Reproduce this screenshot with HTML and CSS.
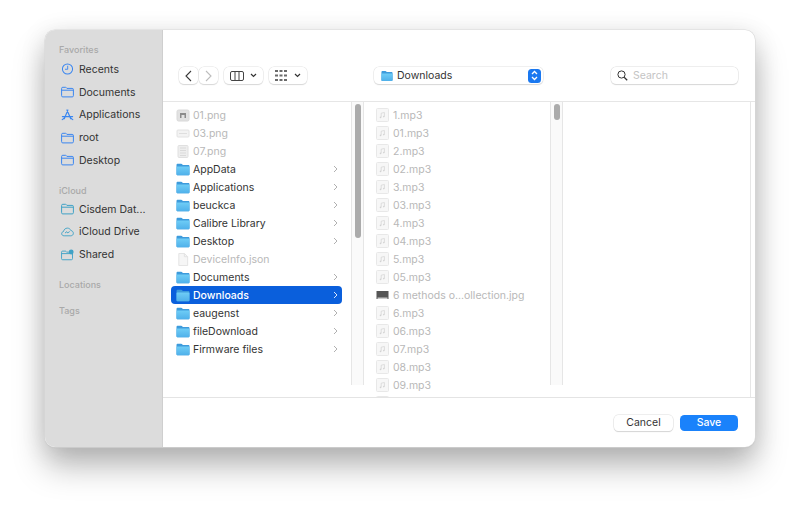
FILE: index.html
```html
<!DOCTYPE html>
<html lang="en">
<head>
<meta charset="utf-8">
<title>Save dialog</title>
<link rel="stylesheet" href="styles.css">
</head>
<body>
<svg class="defs" width="0" height="0" aria-hidden="true">
  <defs>
    <linearGradient id="fg" x1="0" y1="0" x2="0" y2="1"><stop offset="0" stop-color="#6fcdf6"/><stop offset="1" stop-color="#4fb0ea"/></linearGradient>
    <symbol id="folder" viewBox="0 0 14 13"><path d="M.5 2.200C.5 1.300 1 .8 1.900.8h3.200c.6 0 .9.2 1.300.6l.5.5h5.200c.9 0 1.400.5 1.400 1.400v7.600c0 .9-.5 1.400-1.400 1.400H1.900c-.9 0-1.400-.5-1.400-1.400z" fill="#3d9bdc"/><path d="M.5 4.300c0-.5.3-.8.8-.8h11.400c.5 0 .8.3.8.8v6.600c0 .9-.5 1.400-1.400 1.400H1.900c-.9 0-1.400-.5-1.400-1.400z" fill="url(#fg)"/></symbol>
    <symbol id="side-folder" viewBox="0 0 13 11"><path d="M.6 2c0-.8.4-1.200 1.200-1.200h2.600c.5 0 .8.1 1.100.5l.5.6h5.200c.8 0 1.200.4 1.200 1.200v6.100c0 .8-.4 1.200-1.200 1.200H1.800c-.8 0-1.200-.4-1.200-1.200zM.6 3.700h11.800" fill="none" stroke="currentColor" stroke-width="1"/></symbol>
    <symbol id="mp3" viewBox="0 0 13 14"><rect x=".5" y=".5" width="12" height="13" rx="1" fill="#f7f7f7" stroke="#e8e8e8"/><path d="M5.200 9.300V5.200l3.200-.7v4" fill="none" stroke="#d2d2d2" stroke-width=".7"/><circle cx="4.500" cy="9.400" r=".8" fill="#d2d2d2"/><circle cx="7.800" cy="8.600" r=".8" fill="#d2d2d2"/></symbol>
    <symbol id="chev" viewBox="0 0 5 8"><path d="M1 1l3 3-3 3" fill="none" stroke="currentColor" stroke-width="1"/></symbol>
  </defs>
</svg>

<div class="window">
  <aside class="sidebar">
    <h2 class="side-head first">Favorites</h2>
    <div class="side-item"><svg class="side-icon" viewBox="0 0 13 13"><circle cx="6.500" cy="6.500" r="5.500" fill="none" stroke="currentColor" stroke-width="1.100"/><path d="M6.700 3v3.800H3.800" fill="none" stroke="currentColor" stroke-width="1"/></svg><span>Recents</span></div>
    <div class="side-item"><svg class="side-icon"><use href="#side-folder"/></svg><span>Documents</span></div>
    <div class="side-item"><svg class="side-icon" viewBox="0 0 13 13"><path d="M6.900 1.200L3 10.500M5.900 1.200l4.100 9.300M1 8.200h11M.8 11.500l2-1.500M12.200 11.500l-2-1.500" fill="none" stroke="currentColor" stroke-width="1.300" stroke-linecap="round"/></svg><span>Applications</span></div>
    <div class="side-item"><svg class="side-icon"><use href="#side-folder"/></svg><span>root</span></div>
    <div class="side-item"><svg class="side-icon"><use href="#side-folder"/></svg><span>Desktop</span></div>

    <h2 class="side-head">iCloud</h2>
    <div class="side-item cloud"><svg class="side-icon"><use href="#side-folder"/></svg><span>Cisdem Dat...</span></div>
    <div class="side-item cloud"><svg class="side-icon" viewBox="0 0 14 11"><path d="M3.400 9.600C1.800 9.600.7 8.600.7 7.300c0-1.200.9-2.100 2-2.300C3 3 4.700 1.300 6.800 1.300c1.800 0 3.200 1 3.800 2.600 1.600.2 2.700 1.500 2.700 3 0 1.600-1.200 2.700-2.900 2.700z" fill="none" stroke="currentColor" stroke-width="1"/><path d="M4.300 6.600l2-1.400.9 1.300 2.200-1.500" fill="none" stroke="currentColor" stroke-width="1"/></svg><span>iCloud Drive</span></div>
    <div class="side-item cloud"><svg class="side-icon" viewBox="0 0 14 12"><path d="M.6 3c0-.8.4-1.200 1.200-1.200h2.600c.5 0 .8.1 1.100.5l.5.6h5.200c.8 0 1.200.4 1.200 1.200v5.800c0 .8-.4 1.200-1.200 1.200H1.800c-.8 0-1.200-.4-1.200-1.200zM.6 4.500h11.800" fill="none" stroke="currentColor" stroke-width="1"/><circle cx="11" cy="2.800" r="2.600" fill="currentColor"/></svg><span>Shared</span></div>

    <h2 class="side-head gap">Locations</h2>
    <h2 class="side-head gap">Tags</h2>
  </aside>

  <main class="main">
    <header class="toolbar">
      <div class="btn nav"><svg width="7" height="12" viewBox="0 0 7 12"><path d="M6 1L1 6l5 5" fill="none" stroke="#3a3a3a" stroke-width="1.100"/></svg></div>
      <div class="btn nav next"><svg width="7" height="12" viewBox="0 0 7 12"><path d="M1 1l5 5-5 5" fill="none" stroke="#bdbdbd" stroke-width="1.100"/></svg></div>
      <div class="btn view">
        <svg width="14" height="10" viewBox="0 0 14 10"><rect x=".5" y=".5" width="13" height="9" rx="1.500" fill="none" stroke="#444"/><path d="M5 .5v9M9 .5v9" stroke="#444"/></svg>
        <svg class="caret" width="7" height="5" viewBox="0 0 7 5"><path d="M1 1l2.500 2.500L6 1" fill="none" stroke="#333" stroke-width="1.200"/></svg>
      </div>
      <div class="btn view group">
        <svg width="12" height="11" viewBox="0 0 12 11"><path d="M0 1h12M0 5.500h12M0 10h12" stroke="#6a6a6a" stroke-width="2" stroke-dasharray="3 1.500"/></svg>
        <svg class="caret" width="7" height="5" viewBox="0 0 7 5"><path d="M1 1l2.500 2.500L6 1" fill="none" stroke="#333" stroke-width="1.200"/></svg>
      </div>
      <div class="btn popup">
        <svg class="popup-folder"><use href="#folder"/></svg>
        <span class="popup-label">Downloads</span>
        <span class="stepper"><svg width="7" height="11" viewBox="0 0 7 11"><path d="M1 4l2.500-2.500L6 4M1 7l2.500 2.500L6 7" fill="none" stroke="#fff" stroke-width="1.300"/></svg></span>
      </div>
      <div class="search">
        <svg width="11" height="11" viewBox="0 0 11 11"><circle cx="4.500" cy="4.500" r="3.600" fill="none" stroke="#333"/><path d="M7.200 7.200l3 3" stroke="#333" stroke-width="1.300"/></svg>
        <span>Search</span>
      </div>
    </header>

    <section class="browser">
      <div class="column first-col">
        <div class="list">
          <div class="row off"><svg class="file" viewBox="0 0 13 13"><rect x=".5" y="1" width="12" height="11" rx="1.500" fill="#e2e2e2" stroke="#d8d8d8"/><rect x="3.500" y="4" width="6" height="5" fill="#8b8b8b"/><rect x="5" y="6" width="3" height="3" fill="#e2e2e2"/></svg><span>01.png</span></div>
          <div class="row off"><svg class="file" viewBox="0 0 13 13"><rect x=".5" y="3" width="12" height="7" rx="1" fill="#f3f3f3" stroke="#e2e2e2"/><path d="M2.500 6.500h8" stroke="#dedede"/></svg><span>03.png</span></div>
          <div class="row off"><svg class="file" viewBox="0 0 13 13"><rect x="1.500" y=".5" width="10" height="12" rx="1" fill="#eee" stroke="#e0e0e0"/><path d="M3.500 3h6M3.500 5.500h6M3.500 8h6M3.500 10.500h6" stroke="#dadada"/></svg><span>07.png</span></div>
          <div class="row"><svg class="file"><use href="#folder"/></svg><span>AppData</span><svg class="chev"><use href="#chev"/></svg></div>
          <div class="row"><svg class="file"><use href="#folder"/></svg><span>Applications</span><svg class="chev"><use href="#chev"/></svg></div>
          <div class="row"><svg class="file"><use href="#folder"/></svg><span>beuckca</span><svg class="chev"><use href="#chev"/></svg></div>
          <div class="row"><svg class="file"><use href="#folder"/></svg><span>Calibre Library</span><svg class="chev"><use href="#chev"/></svg></div>
          <div class="row"><svg class="file"><use href="#folder"/></svg><span>Desktop</span><svg class="chev"><use href="#chev"/></svg></div>
          <div class="row off"><svg class="file" viewBox="0 0 13 14"><path d="M2 .5h6l3.500 3.500v9.500H2z" fill="#f6f6f6" stroke="#e2e2e2"/><path d="M8 .5V4h3.500" fill="none" stroke="#e2e2e2"/></svg><span>DeviceInfo.json</span></div>
          <div class="row"><svg class="file"><use href="#folder"/></svg><span>Documents</span><svg class="chev"><use href="#chev"/></svg></div>
          <div class="row selected"><svg class="file"><use href="#folder"/></svg><span>Downloads</span><svg class="chev"><use href="#chev"/></svg></div>
          <div class="row"><svg class="file"><use href="#folder"/></svg><span>eaugenst</span><svg class="chev"><use href="#chev"/></svg></div>
          <div class="row"><svg class="file"><use href="#folder"/></svg><span>fileDownload</span><svg class="chev"><use href="#chev"/></svg></div>
          <div class="row"><svg class="file"><use href="#folder"/></svg><span>Firmware files</span><svg class="chev"><use href="#chev"/></svg></div>
        </div>
        <div class="gutter"><div class="thumb long"></div></div>
      </div>

      <div class="column second-col">
        <div class="list">
          <div class="row off"><svg class="file"><use href="#mp3"/></svg><span>1.mp3</span></div>
          <div class="row off"><svg class="file"><use href="#mp3"/></svg><span>01.mp3</span></div>
          <div class="row off"><svg class="file"><use href="#mp3"/></svg><span>2.mp3</span></div>
          <div class="row off"><svg class="file"><use href="#mp3"/></svg><span>02.mp3</span></div>
          <div class="row off"><svg class="file"><use href="#mp3"/></svg><span>3.mp3</span></div>
          <div class="row off"><svg class="file"><use href="#mp3"/></svg><span>03.mp3</span></div>
          <div class="row off"><svg class="file"><use href="#mp3"/></svg><span>4.mp3</span></div>
          <div class="row off"><svg class="file"><use href="#mp3"/></svg><span>04.mp3</span></div>
          <div class="row off"><svg class="file"><use href="#mp3"/></svg><span>5.mp3</span></div>
          <div class="row off"><svg class="file"><use href="#mp3"/></svg><span>05.mp3</span></div>
          <div class="row off"><svg class="file" viewBox="0 0 13 13"><rect x=".5" y="2.500" width="12" height="8" fill="#555"/><rect x="1.500" y="9" width="10" height="1.500" fill="#ccc"/></svg><span>6 methods o...ollection.jpg</span></div>
          <div class="row off"><svg class="file"><use href="#mp3"/></svg><span>6.mp3</span></div>
          <div class="row off"><svg class="file"><use href="#mp3"/></svg><span>06.mp3</span></div>
          <div class="row off"><svg class="file"><use href="#mp3"/></svg><span>07.mp3</span></div>
          <div class="row off"><svg class="file"><use href="#mp3"/></svg><span>08.mp3</span></div>
          <div class="row off"><svg class="file"><use href="#mp3"/></svg><span>09.mp3</span></div>
          <div class="row off"><svg class="file"><use href="#mp3"/></svg></div>
        </div>
        <div class="gutter"><div class="thumb short"></div></div>
      </div>

      <div class="column last-col"></div>
    </section>

    <footer class="footer">
      <button class="action cancel">Cancel</button>
      <button class="action save">Save</button>
    </footer>
  </main>
</div>
</body>
</html>
```

FILE: styles.css
```css
* { box-sizing: border-box; }
html, body { margin: 0; height: 100%; background: #fff; overflow: hidden; }
body {
  padding: 30px 45px;
  font-family: Inter, "Liberation Sans", sans-serif;
  font-size: 10.5px;
  color: #333;
}
.defs { position: absolute; }

.window {
  display: flex;
  width: 710px;
  height: 417px;
  border-radius: 10px;
  overflow: hidden;
  background: #fff;
  box-shadow: 0 0 0 .5px #d9d9d9, 0 1px 1px #bdbdbd, 0 20px 32px rgba(0,0,0,.26), 0 4px 26px rgba(0,0,0,.12);
}

/* sidebar */
.sidebar {
  flex: none;
  width: 118px;
  padding: 0 0 0 14px;
  background: #dcdcdc;
  border-right: 1px solid #cfcfcf;
}
.side-head {
  margin: 0;
  height: 14px;
  line-height: 14px;
  font-size: 9px;
  font-weight: 500;
  color: #a9a9a9;
}
.side-head.first { margin-top: 13px; margin-bottom: 1px; }
.side-head:not(.first):not(.gap) { margin-top: 12px; margin-bottom: 0; }
.side-head.gap { margin-top: 12px; }
.side-item {
  display: flex;
  align-items: center;
  gap: 5px;
  height: 22.75px;
  color: #333;
  font-size: 10.5px;
}
.side-icon { flex: none; width: 13px; height: 12px; margin-left: 2px; color: #3a86f0; }
.cloud .side-icon { color: #3fa2c6; }

/* main */
.main { flex: 1; display: flex; flex-direction: column; min-width: 0; }
.toolbar {
  flex: none;
  display: flex;
  align-items: center;
  height: 72px;
  padding: 20px 17px 0 16px;
  border-bottom: 1px solid #e6e6e6;
}
.btn {
  display: flex;
  align-items: center;
  justify-content: center;
  height: 17px;
  background: #fff;
  border-radius: 5px;
  box-shadow: 0 0 0 .5px #e2e2e2, 0 1px 1px #cfcfcf;
}
.nav { width: 19px; }
.next { margin-left: 1px; }
.view { width: 39px; margin-left: 6px; gap: 6px; }
.group { width: 38px; gap: 7px; }
.popup {
  justify-content: flex-start;
  width: 169px;
  margin-left: 67px;
  padding: 0 2px 0 7px;
}
.popup-folder { width: 12px; height: 12px; flex: none; }
.popup-label { flex: 1; margin-left: 4px; color: #333; font-size: 10.5px; }
.stepper {
  flex: none;
  display: flex;
  align-items: center;
  justify-content: center;
  width: 13px;
  height: 14px;
  border-radius: 3.5px;
  background: #1a78f0;
}
.search {
  display: flex;
  align-items: center;
  gap: 5px;
  width: 127px;
  height: 17px;
  margin-left: 68px;
  padding-left: 6px;
  border-radius: 5px;
  background: #fff;
  box-shadow: 0 0 0 .5px #dedede, 0 1px 1px #d2d2d2;
  color: #c4c4c4;
  font-size: 10.5px;
}

/* browser columns */
.browser { flex: 1; display: flex; min-height: 0; overflow: hidden; }
.column { display: flex; flex: none; height: 295px; overflow: hidden; }
.first-col { width: 201px; }
.second-col { width: 199px; }
.last-col { width: 188px; border-right: 1px solid #e6e6e6; }
.list { flex: 1; min-width: 0; padding-top: 4px; }
.gutter {
  flex: none;
  width: 13px;
  height: 283px;
  padding: 2px 3px 0 3px;
  background: #fafafa;
  border-left: 1px solid #e6e6e6;
  border-right: 1px solid #e6e6e6;
}
.thumb { width: 6px; border-radius: 3px; background: #ababab; }
.long { height: 134px; }
.short { height: 16px; }
.row {
  display: flex;
  align-items: center;
  height: 18px;
  margin: 0 9px 0 8px;
  padding: 0 4px 0 5px;
  border-radius: 4px;
  color: #333;
  font-size: 10.5px;
}
.second-col .row { margin: 0 9px 0 7px; padding-left: 5px; }
.row span { flex: 1; margin-left: 3px; white-space: nowrap; }
.row .file { flex: none; width: 14px; height: 13px; }
.second-col .row .file { width: 13px; height: 14px; }
.second-col .row span { margin-left: 4px; }
.off { color: #b8b8b8; }
.chev { flex: none; width: 5px; height: 8px; color: #b0b0b0; }
.selected { background: #0a5fdc; color: #fff; font-weight: 500; }
.selected .chev { color: #d7e4fb; }

/* footer */
.footer {
  flex: none;
  display: flex;
  justify-content: flex-end;
  align-items: center;
  gap: 7px;
  height: 50px;
  padding: 0 17px 0 0;
  border-top: 1px solid #e4e4e4;
}
.action {
  height: 16px;
  padding: 0;
  border: 0;
  border-radius: 4.5px;
  font-family: inherit;
  font-size: 10.5px;
  line-height: 16px;
}
.cancel { width: 59px; background: #fff; color: #333; box-shadow: 0 0 0 .5px #dedede, 0 1px 1px #cfcfcf; }
.save { width: 58px; background: #1a82fb; color: #fff; font-weight: 500; }
```
